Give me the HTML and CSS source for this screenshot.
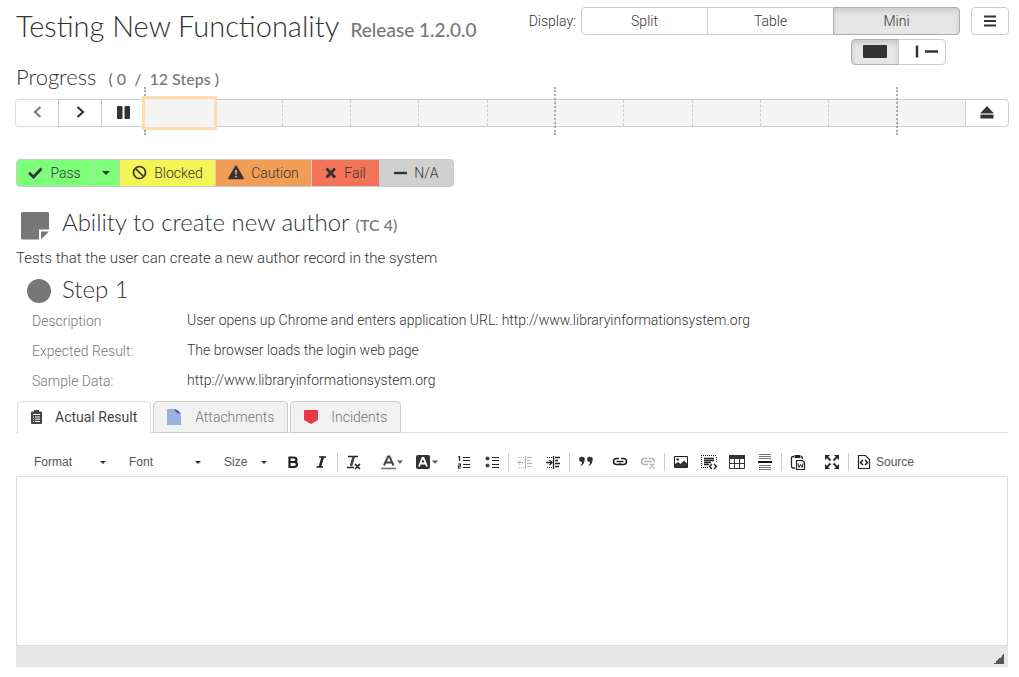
FILE: index.html
```html
<!DOCTYPE html>
<html lang="en">
<head>
<meta charset="utf-8">
<title>Testing New Functionality</title>
<link rel="stylesheet" href="styles.css">
</head>
<body>
<header class="top">
  <h1 class="title">Testing New Functionality <small class="title-sub">Release 1.2.0.0</small></h1>
  <div class="controls">
    <div class="display">
      <span class="display-label" id="display-label">Display:</span>
      <div class="group modes" role="group" aria-labelledby="display-label">
        <button class="btn" type="button">Split</button>
        <button class="btn" type="button">Table</button>
        <button class="btn active" type="button" aria-pressed="true">Mini</button>
      </div>
      <button class="btn menu" type="button" aria-label="Menu"><svg width="14" height="12" viewBox="0 0 14 12"><path d="M1 1.500h12M1 6h12M1 10.500h12" stroke="#333" stroke-width="2"/></svg></button>
    </div>
    <div class="group layouts" role="group" aria-label="Layout">
      <button class="btn active" type="button" aria-label="Full"><svg width="24" height="13" viewBox="0 0 24 13"><rect width="24" height="13" rx="1" fill="#333"/></svg></button>
      <button class="btn" type="button" aria-label="Split pane"><svg width="24" height="13" viewBox="0 0 24 13"><path d="M7 .5v12M15 6.500h13" stroke="#333" stroke-width="2.500"/></svg></button>
    </div>
  </div>
</header>

<main>
  <h2 class="progress-title">Progress <small class="progress-count">( 0 &nbsp;/ &nbsp;12 Steps )</small></h2>
  <div class="group progress">
    <button class="btn nav dim" type="button" aria-label="Previous"><svg width="9" height="12" viewBox="0 0 9 12"><path d="M7.500 1 2 6l5.500 5" fill="none" stroke="#777" stroke-width="2"/></svg></button>
    <button class="btn nav" type="button" aria-label="Next"><svg width="9" height="12" viewBox="0 0 9 12"><path d="M1.500 1 7 6l-5.500 5" fill="none" stroke="#333" stroke-width="2.200"/></svg></button>
    <button class="btn nav" type="button" aria-label="Pause"><svg width="13" height="13" viewBox="0 0 13 13"><rect width="5.500" height="13" rx="1" fill="#333"/><rect x="7.500" width="5.500" height="13" rx="1" fill="#333"/></svg></button>
    <div class="steps">
      <span class="step mark current"></span><span class="step"></span><span class="step"></span><span class="step"></span><span class="step"></span><span class="step"></span><span class="step mark"></span><span class="step"></span><span class="step"></span><span class="step"></span><span class="step"></span><span class="step mark"></span>
    </div>
    <button class="btn nav" type="button" aria-label="Leave"><svg width="14" height="13" viewBox="0 0 14 13"><path d="M7 0 13.500 7H.5zM.5 9h13v3.500H.5z" fill="#333"/><path d="M.5 7h13v2H.5z" fill="#aaa"/></svg></button>
  </div>

  <div class="group statuses">
    <button class="btn status pass" type="button"><svg width="15" height="12" viewBox="0 0 15 12"><path d="M1 5.800 5.500 10 13.500 1.500" fill="none" stroke="#333" stroke-width="2.800"/></svg>Pass</button>
    <button class="btn status pass more" type="button" aria-label="More"><i class="caret"></i></button>
    <button class="btn status blocked" type="button"><svg width="15" height="15" viewBox="0 0 15 15"><circle cx="7.500" cy="7.500" r="6" fill="none" stroke="#333" stroke-width="1.700"/><path d="m3.500 3.500 8 8" stroke="#333" stroke-width="1.700"/></svg>Blocked</button>
    <button class="btn status caution" type="button"><svg width="16" height="15" viewBox="0 0 16 15"><path d="M7.200 1q.8-1.300 1.600 0L15.800 13q.3 1.200-.8 1.200H1Q-.1 14.200.2 13z" fill="#333"/><path d="M8 5v4.500M8 10.800v1.700" stroke="#f29d55" stroke-width="1.800"/></svg>Caution</button>
    <button class="btn status fail" type="button"><svg width="12" height="12" viewBox="0 0 12 12"><path d="m1.500 1.500 8.500 9M10 1.500l-8.500 9" stroke="#333" stroke-width="2.800"/></svg>Fail</button>
    <button class="btn status na" type="button"><svg width="13" height="12" viewBox="0 0 13 12"><path d="M0 6h13" stroke="#333" stroke-width="2.400"/></svg>N/A</button>
  </div>

  <section class="case">
    <svg class="note" width="28" height="28" viewBox="0 0 28 28"><path d="M1.500 0h25Q28 0 28 1.500V17.500H18v10H1.500Q0 27.500 0 26V1.500Q0 0 1.500 0z" fill="#777"/><path d="M20 19.500h8l-8 8z" fill="#777"/></svg>
    <h3 class="subtitle">Ability to create new author <small class="subtitle-sub">(TC 4)</small></h3>
  </section>
  <p class="intro">Tests that the user can create a new author record in the system</p>
  <section class="case">
    <svg class="dot" width="24" height="24" viewBox="0 0 24 24"><circle cx="12" cy="12" r="12" fill="#777"/></svg>
    <h3 class="subtitle">Step 1</h3>
  </section>
  <dl class="details">
    <dt>Description</dt><dd>User opens up Chrome and enters application URL: http://www.libraryinformationsystem.org</dd>
    <dt>Expected Result:</dt><dd>The browser loads the login web page</dd>
    <dt>Sample Data:</dt><dd>http://www.libraryinformationsystem.org</dd>
  </dl>

  <div class="tabs" role="tablist">
    <button class="tab selected" type="button" role="tab" aria-selected="true"><svg width="11" height="14" viewBox="0 0 11 14"><path d="M1 1.500h9q1 0 1 1V13q0 1-1 1H1q-1 0-1-1V2.500q0-1 1-1zM3 0h5v3H3z" fill="#444"/><path d="M2 4.500h7M2 7h1M4 7h5M2 9.200h1M4 9.200h5M2 11.500h1M4 11.500h5" stroke="#fff"/></svg>Actual Result</button>
    <button class="tab" type="button" role="tab"><svg width="15" height="16" viewBox="0 0 15 16"><path d="M0 0h8l6 6v10H0z" fill="#97b3dc"/><path d="M7 0q4 .5 7 5-4-.5-5-2z" fill="#4b4cc4"/></svg>Attachments</button>
    <button class="tab" type="button" role="tab"><svg width="14" height="14" viewBox="0 0 14 14"><path d="M0 1Q0 0 1 0h12q1 0 1 1v9l-7 4-7-4z" fill="#e63946"/></svg>Incidents</button>
  </div>

  <div class="editor">
    <div class="toolbar" role="toolbar" aria-label="Editor">
      <div class="pick"><select class="pick-box" aria-label="Format"><option>Format</option></select><i class="caret"></i></div>
      <div class="pick"><select class="pick-box" aria-label="Font"><option>Font</option></select><i class="caret"></i></div>
      <div class="pick small"><select class="pick-box" aria-label="Size"><option>Size</option></select><i class="caret"></i></div>
      <div class="tools">
        <button class="tool" type="button" aria-label="Bold"><svg width="16" height="16" viewBox="0 0 16 16"><path d="M4.500 3.500h4q3 0 3 2.200T8.500 8h-4V3.500zM4.500 8H9q3 .2 3 2.500T9 13H4.500V8z" fill="none" stroke="#222" stroke-width="2.200"/></svg></button>
        <button class="tool" type="button" aria-label="Italic"><svg width="16" height="16" viewBox="0 0 16 16"><path d="M6 3h7M3.500 13h6.500" stroke="#222" stroke-width="1.600"/><path d="M9.800 3 6.800 13" stroke="#222" stroke-width="2.600"/></svg></button>
      </div>
      <div class="tools split">
        <button class="tool" type="button" aria-label="Remove format"><svg width="16" height="16" viewBox="0 0 16 16"><path d="M2 2.500h10M1 13.500h7" stroke="#222" stroke-width="1.500"/><path d="M7.800 2.500 5 12" stroke="#444" stroke-width="2.600"/><path d="m9 10 5 5M14 10l-5 5" stroke="#222" stroke-width="1.600"/></svg></button>
      </div>
      <div class="tools spaced">
        <button class="tool wide" type="button" aria-label="Text color"><svg width="22" height="16" viewBox="0 0 22 16"><path d="M3 11.500 7 2.500h1.500l4 9M5 8.500h6" fill="none" stroke="#444" stroke-width="2"/><path d="M0 14.500h15" stroke="#777" stroke-width="1.600"/><path d="M16 6.500h6l-3 3.200z" fill="#555"/></svg></button>
        <button class="tool wide" type="button" aria-label="Background color"><svg width="22" height="16" viewBox="0 0 22 16"><rect y="1" width="14" height="14" rx="2" fill="#333"/><path d="M3 12.500 6.500 4h1L11 12.500M4.500 9.500h5" fill="none" stroke="#fff" stroke-width="1.800"/><path d="M16 6.500h6l-3 3.200z" fill="#555"/></svg></button>
      </div>
      <div class="tools spaced">
        <button class="tool" type="button" aria-label="Numbered list"><svg width="16" height="16" viewBox="0 0 16 16"><path d="M7 3.500h7M7 6.500h7M7 10.500h7M7 13.500h7M3.500 2v5M2 3h1.500M2 10h2.500v2H2.500v2H5" fill="none" stroke="#222" stroke-width="1.200"/></svg></button>
        <button class="tool" type="button" aria-label="Bulleted list"><svg width="16" height="16" viewBox="0 0 16 16"><circle cx="3.500" cy="4.500" r="2" fill="#444"/><circle cx="3.500" cy="11.500" r="2" fill="#444"/><path d="M8 3.500h7M8 6.500h7M8 10.500h7M8 13.500h7" stroke="#222" stroke-width="1.200"/></svg></button>
      </div>
      <div class="tools split">
        <button class="tool" type="button" aria-label="Decrease indent" disabled><svg width="16" height="16" viewBox="0 0 16 16"><path d="M8.500 2v13M10 3.500h5M10 6.500h3M10 9.500h5M10 12.500h4M1 8.500h5M3.500 6 1 8.500 3.500 11" fill="none" stroke="#222"/><path d="M2 3.500h5M2 13.500h5" stroke="#222" stroke-dasharray="1 1"/></svg></button>
        <button class="tool" type="button" aria-label="Increase indent"><svg width="16" height="16" viewBox="0 0 16 16"><path d="M8.500 2v13M10 3.500h5M10 6.500h3M10 9.500h5M10 12.500h4M1 8.500h6M4.500 6 7 8.500 4.500 11" fill="none" stroke="#222" stroke-width="1.300"/><path d="M2 3.500h5M2 13.500h5" stroke="#222" stroke-dasharray="1 1"/></svg></button>
      </div>
      <div class="tools split">
        <button class="tool" type="button" aria-label="Quote"><svg width="16" height="16" viewBox="0 0 16 16"><path d="M1 4.500a2.800 2.400 0 1 1 5.600 1.500Q6.600 10 2.300 12.500q2-3 1.700-4.500Q1 8 1 4.500zM9 4.500A2.800 2.400 0 1 1 14.600 6q0 4-4.300 6.500 2-3 1.700-4.500-3 0-3-3.500z" fill="#333"/></svg></button>
      </div>
      <div class="tools spaced">
        <button class="tool" type="button" aria-label="Link"><svg width="16" height="16" viewBox="0 0 16 16"><path d="M7 4.500H4.500a3 3 0 0 0 0 6H7a3 3 0 0 0 2-1M9 4.500h2.500a3 3 0 0 1 0 6H9a3 3 0 0 1-2-1M4.500 7.500h7" fill="none" stroke="#222" stroke-width="1.500"/></svg></button>
        <button class="tool" type="button" aria-label="Unlink" disabled><svg width="16" height="16" viewBox="0 0 16 16"><path d="M7 4.500H4.500a3 3 0 0 0 0 6H8M9 4.500h2.500a3 3 0 0 1 3 3.500M4.500 7.500h7M9.500 9.500l5 5M14.500 9.500l-5 5" fill="none" stroke="#222" stroke-width="1.400"/></svg></button>
      </div>
      <div class="tools split">
        <button class="tool" type="button" aria-label="Image"><svg width="16" height="16" viewBox="0 0 16 16"><path d="M1.500 2.500h13v11h-13z" fill="#fff" stroke="#222"/><path d="M2 13v-3l3-2 2.500 2L11 6.500l3 3V13z" fill="#333"/><circle cx="4.800" cy="5.500" r="1.300" fill="#333"/></svg></button>
        <button class="tool" type="button" aria-label="Container"><svg width="16" height="16" viewBox="0 0 16 16"><path d="M0 1.500h16M0 13.500h8M.5 3v10M15.500 3v6" stroke="#222" stroke-dasharray="1 1"/><path d="M3 4.500h10M3 6.500h10M3 8.500h7M3 10.500h5M11 10l-2.500 2.500L11 15M13 10l2.500 2.500L13 15" fill="none" stroke="#222" stroke-width="1.300"/></svg></button>
        <button class="tool" type="button" aria-label="Table"><svg width="16" height="16" viewBox="0 0 16 16"><path d="M0 1h16v4H0z" fill="#333"/><path d="M.5 4v10.500h15V4M0 9.500h16M5.500 4v10.500M10.500 4v10.500" fill="none" stroke="#333"/></svg></button>
        <button class="tool" type="button" aria-label="Horizontal line"><svg width="16" height="16" viewBox="0 0 16 16"><path d="M2 .5h12M2 2.500h12M2 4.500h12M2 11.500h12M2 13.500h12M2 15.500h12" stroke="#777"/><path d="M1 8h14" stroke="#111" stroke-width="2"/></svg></button>
      </div>
      <div class="tools split">
        <button class="tool" type="button" aria-label="Paste from Word"><svg width="16" height="16" viewBox="0 0 16 16"><path d="M4 2.500H3Q1.500 2.500 1.500 4v8.500q0 1.500 1.500 1.500h2M11 2.500q1.500 0 1.500 2V5" fill="none" stroke="#222" stroke-width="1.300"/><path d="M4.500 1h6v3h-6z" fill="#222"/><path d="M6.500 6.500h6l2 2v7h-8z" fill="#fff" stroke="#222" stroke-width="1.200"/><path d="m8 9.500 1 4 1.500-3 1.500 3 1-4" fill="none" stroke="#222"/></svg></button>
      </div>
      <div class="tools spaced">
        <button class="tool" type="button" aria-label="Maximize"><svg width="16" height="16" viewBox="0 0 16 16"><path d="M1 1h5L1 6zM15 1v5l-5-5zM1 15v-5l5 5zM15 15h-5l5-5z" fill="#222"/><path d="m2 2 4.500 4.500M14 2 9.500 6.500M2 14l4.500-4.500M14 14 9.500 9.500" stroke="#333" stroke-width="2"/></svg></button>
      </div>
      <div class="tools split">
        <button class="tool source" type="button"><svg width="16" height="16" viewBox="0 0 16 16"><path d="M2.500 1.500h7l4 4v9h-11z" fill="none" stroke="#222" stroke-width="1.200"/><path d="M7 6 4.500 8.500 7 11M9 6l2.500 2.500L9 11" fill="none" stroke="#222" stroke-width="1.500"/></svg>Source</button>
      </div>
    </div>
    <textarea class="entry" aria-label="Actual Result"></textarea>
    <div class="bottom"><i class="grip"></i></div>
  </div>
</main>
</body>
</html>
```

FILE: styles.css
```css
* { box-sizing: border-box; }

body {
  margin: 0;
  padding: 7px 11px 10px 16px;
  background: #fff;
  color: #333;
  font: 300 14px/20px Roboto, "Liberation Sans", sans-serif;
}

button, select, textarea { font: inherit; color: inherit; }
svg { display: block; flex: none; overflow: visible; }
h1, h2, h3, p, dl, dd { margin: 0; }
h1, h2, h3 { font-family: Lato, "Liberation Sans", sans-serif; font-weight: 300; }
small { font-weight: 500; color: #777; }

.top { display: flex; justify-content: space-between; margin-right: -1px; }
.title { font-size: 29px; line-height: 38px; }
.title-sub { margin-left: 4px; font-size: 19px; }

.controls { display: flex; flex-direction: column; align-items: flex-end; gap: 4px; }
.display { display: flex; align-items: center; }
.display-label { margin-right: 5px; }

.group { display: flex; }
.btn {
  display: flex;
  align-items: center;
  justify-content: center;
  height: 28px;
  padding: 0;
  border: 1px solid #ccc;
  border-radius: 4px;
  background: #fff;
}
.group > .btn { border-radius: 0; }
.group > .btn + .btn { margin-left: -1px; }
.group > .btn:first-child { border-radius: 4px 0 0 4px; }
.group > .btn:last-child { border-radius: 0 4px 4px 0; }
.btn.active { background: #e6e6e6; border-color: #adadad; box-shadow: inset 0 3px 5px rgba(0, 0, 0, .125); }
.modes > .btn { width: 127px; }
.menu { width: 38px; margin-left: 11px; }
.layouts { margin-right: 63px; }
.layouts > .btn { width: 48px; height: 26px; padding-bottom: 2px; }

.progress-title { font-size: 22px; line-height: 24px; }
.progress-count { margin-left: 6px; font-size: 16px; }
.progress { margin: 8px -1px 0; }
.progress > .nav { width: 44px; padding-bottom: 2px; }
.progress > .dim { border-color: #ddd; border-right-color: #ccc; }
.steps {
  display: flex;
  flex: 1;
  border: solid #ccc;
  border-width: 1px 0;
  background: #f4f4f4;
}
.step { position: relative; flex: 1; border-left: 1px dashed #ccc; }
.step:first-child, .current + .step { border-left-color: transparent; }
.mark::before {
  content: "";
  position: absolute;
  top: -13px;
  bottom: -9px;
  left: -2px;
  border-left: 2px dotted #aaa;
}
.current::after {
  content: "";
  position: absolute;
  inset: -4px -4px -4px -4px;
  border: 3px solid #ffdcab;
  background: #f4f4f4;
}

.statuses { margin-top: 32px; }
.status { gap: 7px; padding-bottom: 1px; }
.pass { width: 77px; background: #7dff7a; }
.more { width: 28px; padding-bottom: 0; }
.blocked { width: 97px; background: #f4f455; }
.caution { width: 97px; background: #f29d55; }
.fail { width: 69px; background: #f47457; }
.na { width: 75px; background: #d0d0d0; }
.caret { border: solid transparent; border-width: 4px 4px 0; border-top-color: #333; }

.case { display: flex; align-items: flex-start; }
.statuses + .case { margin-top: 20px; }
.note { margin: 5px 13px 0 5px; }
.dot { margin: 5px 11px 0 11px; }
.subtitle { font-size: 24px; line-height: 30px; }
.subtitle-sub { font-size: 16px; }
.intro { margin: 8px 0 6px; font-size: 15px; }

.details {
  display: grid;
  grid-template-columns: 155px 1fr;
  row-gap: 10px;
  margin: 6px 0 11px;
  padding-left: 16px;
}
.details dt { color: #777; padding-top: 3px; line-height: 17px; }

.tabs { display: flex; gap: 2px; padding-left: 1px; border-bottom: 1px solid #ddd; }
.tab {
  display: flex;
  align-items: center;
  gap: 13px;
  height: 32px;
  margin-bottom: -1px;
  padding: 0 13px;
  border: 1px solid #ccc;
  border-radius: 4px 4px 0 0;
  background: #f1f1f1;
  color: #777;
}
.tab.selected { background: #fff; color: #444; border-color: #ddd; border-bottom-color: #fff; font-weight: 400; }

.toolbar {
  display: flex;
  align-items: center;
  height: 43px;
  padding: 14px 0 0 11px;
  color: #555;
  font: 12px/16px "Liberation Sans", Arial, sans-serif;
}
.pick { position: relative; width: 85px; margin-right: 10px; }
.pick.small { width: 56px; margin-right: 6px; }
.pick-box { width: 100%; height: 22px; padding: 0 7px; border: 0; background: none; appearance: none; }
.pick .caret { position: absolute; top: 10px; right: 6px; border-width: 3px 3px 0; pointer-events: none; }
.tools { display: flex; align-items: center; }
.spaced { margin-left: 6px; }
.split::before { content: ""; width: 1px; height: 18px; margin: 0 2px; background: #ccc; }
.tool {
  display: flex;
  align-items: center;
  justify-content: center;
  gap: 4px;
  width: 28px;
  height: 22px;
  padding: 0;
  border: 0;
  background: none;
}
.tool:disabled { opacity: .35; }
.tool.wide { width: 35px; }
.tool.source { width: auto; padding: 0 5px; }

.entry { display: block; width: 100%; height: 170px; border: 1px solid #ddd; background: #fff; resize: none; }
.bottom { display: flex; align-items: flex-end; justify-content: flex-end; height: 21px; padding: 3px 4px; background: #e7e7e7; }
.grip { width: 10px; height: 10px; background: linear-gradient(135deg, transparent 50%, #555 50%); }
```
